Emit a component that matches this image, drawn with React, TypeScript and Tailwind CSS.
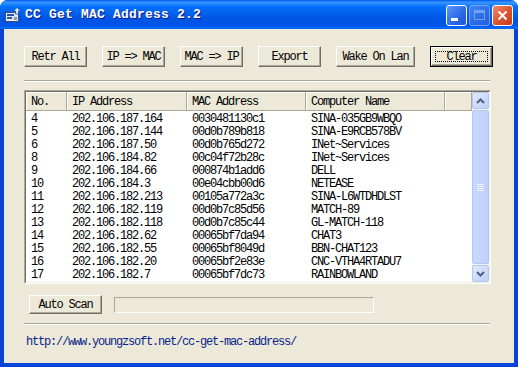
import React from "react";

const rows: [string, string, string, string][] = [
  ["4", "202.106.187.164", "0030481130c1", "SINA-035GB9WBQO"],
  ["5", "202.106.187.144", "00d0b789b818", "SINA-E9RCB578BV"],
  ["6", "202.106.187.50", "00d0b765d272", "INet~Services"],
  ["8", "202.106.184.82", "00c04f72b28c", "INet~Services"],
  ["9", "202.106.184.66", "000874b1add6", "DELL"],
  ["10", "202.106.184.3", "00e04cbb00d6", "NETEASE"],
  ["11", "202.106.182.213", "00105a772a3c", "SINA-L6WTDHDLST"],
  ["12", "202.106.182.119", "00d0b7c85d56", "MATCH-89"],
  ["13", "202.106.182.118", "00d0b7c85c44", "GL-MATCH-118"],
  ["14", "202.106.182.62", "00065bf7da94", "CHAT3"],
  ["15", "202.106.182.55", "00065bf8049d", "BBN-CHAT123"],
  ["16", "202.106.182.20", "00065bf2e83e", "CNC-VTHA4RTADU7"],
  ["17", "202.106.182.7", "00065bf7dc73", "RAINBOWLAND"],
];

function Btn({ label, w, h = "h-[21px]" }: { label: string; w: string; h?: string }) {
  return (
    <div
      className={`${w} ${h} flex items-center justify-center pt-[1px] bg-[#ECE9D8] border border-t-white border-l-white border-r-[#716F64] border-b-[#716F64] shadow-[inset_-1px_-1px_0_#ACA899]`}
    >
      {label}
    </div>
  );
}

function Separator({ mt }: { mt: string }) {
  return <div className={`${mt} w-[466px] h-[2px] border-t border-t-[#ACA899] border-b border-b-white`} />;
}

function Arrow({ up }: { up: boolean }) {
  return (
    <div className="h-[17px] rounded-[2px] border border-[#B3C7F5] bg-[linear-gradient(135deg,#E1EAFE,#BCCDF8)] flex items-center justify-center">
      <svg width="9" height="6" viewBox="0 0 9 6">
        <path
          d={up ? "M1 5 L4.5 1.5 L8 5" : "M1 1 L4.5 4.5 L8 1"}
          stroke="#4D6185"
          strokeWidth="2"
          fill="none"
        />
      </svg>
    </div>
  );
}

export default function App() {
  const cols = ["w-[41px]", "w-[120px]", "w-[119px]", "w-[139px]", "w-[27px]"];
  const heads = ["No.", "IP Address", "MAC Address", "Computer Name", ""];
  return (
    <div className="w-[518px] h-[367px] flex flex-col rounded-t-[8px] overflow-hidden bg-[#0843D8] font-['Liberation_Mono',monospace] text-[12px] tracking-[-1.2px] text-black">
      {/* Title bar */}
      <div className="h-[29px] flex items-center pl-[5px] pr-[5px] bg-[linear-gradient(180deg,#0058EE_0%,#3A93FF_8%,#288EFF_12%,#127DFF_18%,#036FFC_24%,#0262EE_44%,#0057E5_60%,#0054E3_76%,#0055EB_86%,#005BF5_92%,#026AFE_96%,#0062EF_100%)]">
        <svg width="16" height="16" viewBox="0 0 16 16">
          <rect x="0.5" y="5.5" width="13" height="9" fill="#E4E8F0" stroke="#3E4E72" />
          <rect x="2" y="7" width="7" height="2" fill="#2A55B8" />
          <rect x="2" y="10" width="5" height="2" fill="#2A55B8" />
          <rect x="9" y="10" width="3" height="3" fill="#8A96AE" />
          <path d="M12 0.5 L15.5 4 L13.5 4 L13.5 7 L10.5 7 L10.5 4 L8.5 4 Z" fill="#D8ECFF" stroke="#2B4E9A" strokeWidth="0.8" />
        </svg>
        <div className="ml-[4px] text-[13px] font-bold tracking-[0.2px] text-white [text-shadow:1px_1px_#0A1A8A]">
          CC Get MAC Address 2.2
        </div>
        <div className="ml-auto flex gap-[2px] mt-[1px]">
          <div className="w-[21px] h-[21px] rounded-[3px] border border-white bg-[linear-gradient(135deg,#5C97F8,#2A68E6_60%,#1F55D6)] flex items-end pl-[4px] pb-[4px]">
            <div className="w-[7px] h-[3px] bg-white" />
          </div>
          <div className="w-[21px] h-[21px] rounded-[3px] border border-[#8CB1F8] bg-[linear-gradient(135deg,#4F8CF6,#3370E8_60%,#2A62DE)] flex items-center justify-center opacity-80">
            <div className="w-[11px] h-[10px] border border-[#8FB0F2] border-t-[3px]" />
          </div>
          <div className="w-[21px] h-[21px] rounded-[3px] border border-white bg-[linear-gradient(135deg,#EE8B6E,#DA5330_55%,#C4391A)] flex items-center justify-center">
            <svg width="11" height="11" viewBox="0 0 11 11">
              <path d="M1.5 1.5 L9.5 9.5 M9.5 1.5 L1.5 9.5" stroke="white" strokeWidth="2" />
            </svg>
          </div>
        </div>
      </div>

      {/* Client */}
      <div className="flex-1 mx-[4px] mb-[4px] bg-[#ECE9D8] flex flex-col pl-[20px] pt-[17px]">
        <div className="flex gap-[15px]">
          <Btn label="Retr All" w="w-[63px]" />
          <Btn label="IP => MAC" w="w-[63px]" />
          <Btn label="MAC => IP" w="w-[63px]" />
          <Btn label="Export" w="w-[63px]" />
          <Btn label="Wake On Lan" w="w-[79px]" />
          <div className="relative w-[63px] h-[21px] border border-black">
            <div className="w-full h-full flex items-center justify-center pt-[1px] border border-t-white border-l-white border-r-[#716F64] border-b-[#716F64] shadow-[inset_-1px_-1px_0_#ACA899]">
              Clear
            </div>
            <span className="absolute left-[4px] right-[4px] top-[4px] bottom-[4px] border border-dotted border-black" />
          </div>
        </div>

        <Separator mt="mt-[13px]" />

        {/* List */}
        <div className="mt-[8px] w-[467px] h-[194px] border border-t-[#ACA899] border-l-[#ACA899] border-r-white border-b-white">
          <div className="w-full h-full border border-t-[#716F64] border-l-[#716F64] border-r-[#F1EFE2] border-b-[#F1EFE2] flex bg-white">
            <div className="w-[446px] flex flex-col">
              <div className="h-[19px] flex bg-[#ECE9D8]">
                {heads.map((h, i) => (
                  <div
                    key={i}
                    className={`${cols[i]} h-full flex items-center pl-[5px] pt-[1px] border-r border-r-[#ACA899] border-b border-b-[#ACA899] shadow-[inset_1px_1px_0_#FFFFFF]`}
                  >
                    {h}
                  </div>
                ))}
              </div>
              <div className="flex flex-col pt-[2px]">
                {rows.map((r, ri) => (
                  <div key={ri} className="h-[13px] flex leading-[13px]">
                    {r.map((c, ci) => (
                      <div key={ci} className={`${cols[ci]} pl-[5px] whitespace-nowrap`}>
                        {c}
                      </div>
                    ))}
                  </div>
                ))}
              </div>
            </div>
            <div className="w-[17px] flex flex-col bg-[#F4F3EE]">
              <Arrow up />
              <div className="flex-1 my-[1px] rounded-[2px] border border-[#B3C7F5] bg-[linear-gradient(90deg,#C9D8FC,#BED0FA)] flex items-center justify-center">
                <div className="flex flex-col gap-[1px]">
                  <div className="w-[7px] h-[1px] bg-[#EEF4FE]" />
                  <div className="w-[7px] h-[1px] bg-[#EEF4FE]" />
                  <div className="w-[7px] h-[1px] bg-[#EEF4FE]" />
                  <div className="w-[7px] h-[1px] bg-[#EEF4FE]" />
                </div>
              </div>
              <Arrow up={false} />
            </div>
          </div>
        </div>

        <div className="mt-[11px] flex items-center gap-[12px] pl-[5px]">
          <Btn label="Auto Scan" w="w-[73px]" h="h-[19px]" />
          <div className="w-[260px] h-[16px] border border-t-[#ACA899] border-l-[#ACA899] border-r-white border-b-white" />
        </div>

        <Separator mt="mt-[9px]" />

        <div className="mt-[11px] pl-[2px] leading-[12px] text-[#0A1E8C]">
          http://www.youngzsoft.net/cc-get-mac-address/
        </div>
      </div>
    </div>
  );
}
